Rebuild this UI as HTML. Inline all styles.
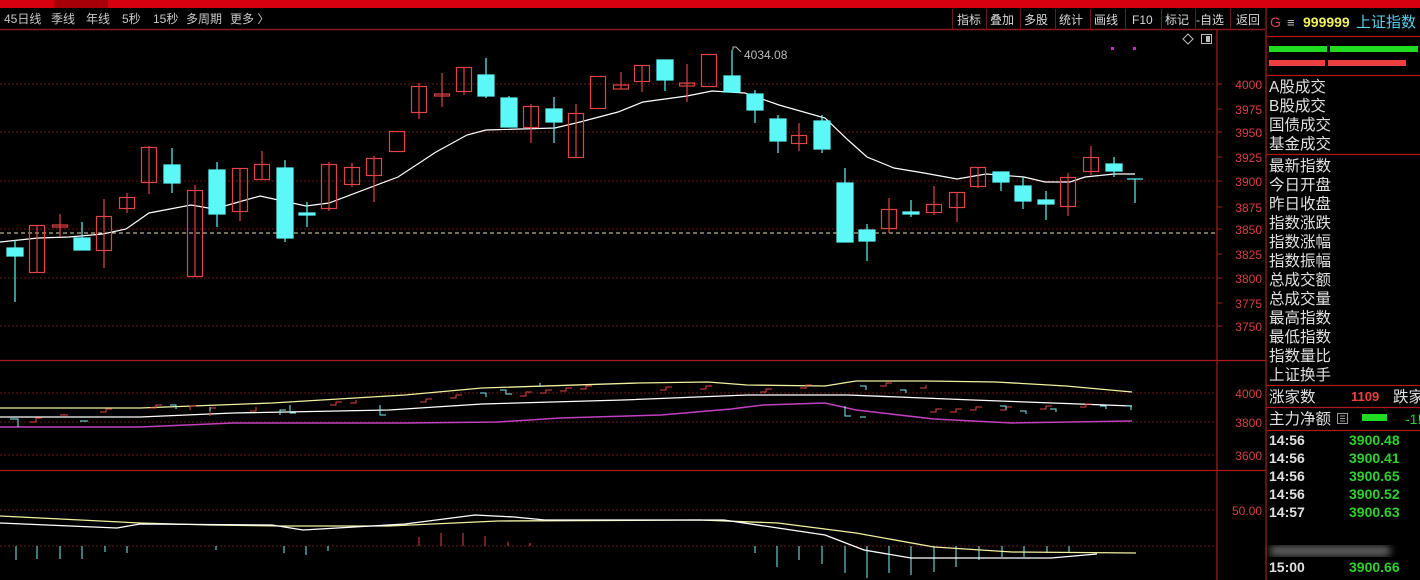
<!DOCTYPE html>
<html><head><meta charset="utf-8"><style>
html,body{margin:0;padding:0;background:#000;width:1420px;height:580px;overflow:hidden;font-family:"Liberation Sans","Noto Sans CJK SC",sans-serif}
svg{position:absolute;left:0;top:0}
</style></head><body>
<svg width="1420" height="580" viewBox="0 0 1420 580" xmlns="http://www.w3.org/2000/svg" font-family="Liberation Sans, Noto Sans CJK SC, sans-serif">
<rect width="1420" height="580" fill="#000"/>
<rect x="0" y="0" width="1420" height="8" fill="#d60010"/>
<rect x="54" y="0" width="54" height="8" fill="#a80008"/>
<line x1="0" y1="29.5" x2="1265" y2="29.5" stroke="#8a1a20" stroke-width="1.5"/>
<g fill="#c8c8c8" font-size="12">
<text x="4" y="23">45日线</text><text x="51" y="23">季线</text><text x="86" y="23">年线</text><text x="122" y="23">5秒</text><text x="153" y="23">15秒</text><text x="186" y="23">多周期</text><text x="230" y="23">更多 〉</text>
</g>
<g fill="#d8d8d8" font-size="12">
<text x="957" y="24">指标</text><text x="990" y="24">叠加</text><text x="1024" y="24">多股</text><text x="1059" y="24">统计</text><text x="1094" y="24">画线</text><text x="1132" y="24">F10</text><text x="1165" y="24">标记</text><text x="1196" y="24">-自选</text><text x="1236" y="24">返回</text>
</g>
<g stroke="#6a1a1a" stroke-width="1">
<line x1="952.5" y1="9" x2="952.5" y2="29"/><line x1="986.5" y1="9" x2="986.5" y2="29"/><line x1="1020.5" y1="9" x2="1020.5" y2="29"/><line x1="1055.5" y1="9" x2="1055.5" y2="29"/><line x1="1090.5" y1="9" x2="1090.5" y2="29"/><line x1="1125.5" y1="9" x2="1125.5" y2="29"/><line x1="1161.5" y1="9" x2="1161.5" y2="29"/><line x1="1195.5" y1="9" x2="1195.5" y2="29"/><line x1="1230.5" y1="9" x2="1230.5" y2="29"/>
</g>
<g stroke="#b01818" stroke-width="1.2">
<line x1="1217" y1="30" x2="1217" y2="580"/>
<line x1="1266" y1="8" x2="1266" y2="580"/>
<line x1="0" y1="360.5" x2="1266" y2="360.5"/>
<line x1="0" y1="470.5" x2="1266" y2="470.5"/>
</g>
<g stroke="#6a1818" stroke-width="1" stroke-dasharray="2,2">
<line x1="0" y1="84" x2="1217" y2="84"/><line x1="0" y1="132" x2="1217" y2="132"/><line x1="0" y1="181" x2="1217" y2="181"/><line x1="0" y1="229" x2="1217" y2="229"/><line x1="0" y1="278" x2="1217" y2="278"/><line x1="0" y1="326" x2="1217" y2="326"/>
<line x1="0" y1="393" x2="1217" y2="393"/><line x1="0" y1="422" x2="1217" y2="422"/><line x1="0" y1="455" x2="1217" y2="455"/>
<line x1="0" y1="510" x2="1217" y2="510"/><line x1="0" y1="546" x2="1217" y2="546"/>
</g>
<line x1="0" y1="233" x2="1217" y2="233" stroke="#e8e0b0" stroke-width="1" stroke-dasharray="4,3"/>
<g stroke="#b01818"><line x1="1217" y1="84" x2="1222" y2="84"/><line x1="1217" y1="109" x2="1222" y2="109"/><line x1="1217" y1="132" x2="1222" y2="132"/><line x1="1217" y1="157" x2="1222" y2="157"/><line x1="1217" y1="181" x2="1222" y2="181"/><line x1="1217" y1="207" x2="1222" y2="207"/><line x1="1217" y1="229" x2="1222" y2="229"/><line x1="1217" y1="254" x2="1222" y2="254"/><line x1="1217" y1="278" x2="1222" y2="278"/><line x1="1217" y1="303" x2="1222" y2="303"/><line x1="1217" y1="326" x2="1222" y2="326"/></g>
<g fill="#d84040" font-size="12" text-anchor="end">
<text x="1262" y="89">4000</text><text x="1262" y="114">3975</text><text x="1262" y="137">3950</text><text x="1262" y="162">3925</text><text x="1262" y="186">3900</text><text x="1262" y="212">3875</text><text x="1262" y="234">3850</text><text x="1262" y="259">3825</text><text x="1262" y="283">3800</text><text x="1262" y="308">3775</text><text x="1262" y="331">3750</text>
<text x="1262" y="398">4000</text><text x="1262" y="427">3800</text><text x="1262" y="460">3600</text><text x="1262" y="515">50.00</text>
</g>
<path d="M1188 34 L1193 39 L1188 44 L1183 39 Z" fill="none" stroke="#bbb"/>
<rect x="1201.5" y="34.5" width="10" height="9" fill="none" stroke="#bbb"/><rect x="1206" y="36" width="4" height="6" fill="#bbb"/>
<rect x="1111" y="47" width="3" height="3" fill="#c030c0"/><rect x="1133" y="47" width="3" height="3" fill="#c030c0"/>
<polyline fill="none" stroke="#fff" stroke-width="1.2" points="0,242 38,238 69,237 103,234 126,229 149,213 191,205 214,209 260,196 306,206 329,203 398,177 436,152 467,135 486,130 555,128 580,122 618,112 643,102 687,96 712,91 745,93 779,105 825,118 848,140 867,157 894,168 924,173 957,179 986,174 1024,177 1045,182 1070,182 1085,177 1114,174 1135,174"/>
<g stroke="#e04444" fill="none" stroke-width="1.2">
<line x1="37" y1="225" x2="37" y2="273"/><rect x="29.5" y="225.5" width="15" height="47"/>
<line x1="60" y1="214" x2="60" y2="237"/><rect x="52.5" y="225" width="15" height="2"/>
<line x1="104" y1="199" x2="104" y2="268"/><rect x="96.5" y="216.5" width="15" height="34"/>
<line x1="127" y1="193" x2="127" y2="213"/><rect x="119.5" y="197.5" width="15" height="11"/>
<line x1="149" y1="146" x2="149" y2="194"/><rect x="141.5" y="147.5" width="15" height="35"/>
<line x1="195" y1="185" x2="195" y2="277"/><rect x="187.5" y="190.5" width="15" height="86"/>
<line x1="240" y1="168" x2="240" y2="221"/><rect x="232.5" y="168.5" width="15" height="43"/>
<line x1="262" y1="151" x2="262" y2="180"/><rect x="254.5" y="164.5" width="15" height="15"/>
<line x1="329" y1="162" x2="329" y2="211"/><rect x="321.5" y="164.5" width="15" height="44"/>
<line x1="352" y1="163" x2="352" y2="187"/><rect x="344.5" y="167.5" width="15" height="17"/>
<line x1="374" y1="156" x2="374" y2="202"/><rect x="366.5" y="158.5" width="15" height="17"/>
<rect x="389.5" y="131.5" width="15" height="20"/>
<line x1="419" y1="83" x2="419" y2="119"/><rect x="411.5" y="86.5" width="15" height="26"/>
<line x1="442" y1="73" x2="442" y2="107"/><rect x="434.5" y="94" width="15" height="2"/>
<line x1="464" y1="67" x2="464" y2="95"/><rect x="456.5" y="67.5" width="15" height="24"/>
<line x1="531" y1="104" x2="531" y2="143"/><rect x="523.5" y="106.5" width="15" height="21"/>
<line x1="576" y1="104" x2="576" y2="158"/><rect x="568.5" y="113.5" width="15" height="44"/>
<rect x="590.5" y="76.5" width="15" height="32"/>
<line x1="621" y1="72" x2="621" y2="89"/><rect x="613.5" y="85" width="15" height="4"/>
<line x1="642" y1="65" x2="642" y2="92"/><rect x="634.5" y="65.5" width="15" height="16"/>
<line x1="687" y1="64" x2="687" y2="102"/><rect x="679.5" y="83" width="15" height="3"/>
<rect x="701.5" y="54.5" width="15" height="32"/>
<line x1="799" y1="123" x2="799" y2="151"/><rect x="791.5" y="135.5" width="15" height="8"/>
<line x1="889" y1="198" x2="889" y2="233"/><rect x="881.5" y="209.5" width="15" height="19"/>
<line x1="934" y1="186" x2="934" y2="215"/><rect x="926.5" y="204.5" width="15" height="8"/>
<line x1="957" y1="192" x2="957" y2="222"/><rect x="949.5" y="192.5" width="15" height="15"/>
<line x1="978" y1="167" x2="978" y2="188"/><rect x="970.5" y="167.5" width="15" height="19"/>
<line x1="1068" y1="173" x2="1068" y2="216"/><rect x="1060.5" y="177.5" width="15" height="29"/>
<line x1="1091" y1="146" x2="1091" y2="175"/><rect x="1083.5" y="157.5" width="15" height="14"/>
</g>
<g stroke="#5cf8f8" fill="#5cf8f8" stroke-width="1.2">
<line x1="15" y1="240" x2="15" y2="302"/><rect x="7" y="248" width="16" height="8"/>
<line x1="82" y1="222" x2="82" y2="250"/><rect x="74" y="238" width="16" height="12"/>
<line x1="172" y1="148" x2="172" y2="193"/><rect x="164" y="165" width="16" height="18"/>
<line x1="217" y1="162" x2="217" y2="227"/><rect x="209" y="170" width="16" height="44"/>
<line x1="285" y1="160" x2="285" y2="242"/><rect x="277" y="168" width="16" height="70"/>
<line x1="307" y1="202" x2="307" y2="227"/><rect x="299" y="213" width="16" height="2"/>
<line x1="486" y1="58" x2="486" y2="98"/><rect x="478" y="75" width="16" height="21"/>
<line x1="509" y1="96" x2="509" y2="127"/><rect x="501" y="98" width="16" height="29"/>
<line x1="554" y1="97" x2="554" y2="143"/><rect x="546" y="109" width="16" height="13"/>
<line x1="665" y1="60" x2="665" y2="91"/><rect x="657" y="60" width="16" height="20"/>
<line x1="732" y1="50" x2="732" y2="92"/><rect x="724" y="76" width="16" height="16"/>
<line x1="755" y1="90" x2="755" y2="123"/><rect x="747" y="94" width="16" height="16"/>
<line x1="778" y1="115" x2="778" y2="153"/><rect x="770" y="119" width="16" height="22"/>
<line x1="822" y1="115" x2="822" y2="153"/><rect x="814" y="121" width="16" height="28"/>
<line x1="845" y1="168" x2="845" y2="242"/><rect x="837" y="183" width="16" height="59"/>
<line x1="867" y1="224" x2="867" y2="261"/><rect x="859" y="230" width="16" height="11"/>
<line x1="911" y1="200" x2="911" y2="217"/><rect x="903" y="212" width="16" height="2"/>
<line x1="1001" y1="172" x2="1001" y2="191"/><rect x="993" y="172" width="16" height="10"/>
<line x1="1023" y1="177" x2="1023" y2="209"/><rect x="1015" y="186" width="16" height="15"/>
<line x1="1046" y1="191" x2="1046" y2="220"/><rect x="1038" y="200" width="16" height="4"/>
<line x1="1114" y1="157" x2="1114" y2="177"/><rect x="1106" y="164" width="16" height="7"/>
<line x1="1135" y1="179" x2="1135" y2="203"/><line x1="1127" y1="179" x2="1143" y2="179"/>
</g>
<path d="M733 50 L733 47 L736 47 L741 52" fill="none" stroke="#bbb"/>
<text x="744" y="59" fill="#bbb" font-size="12">4034.08</text>
<polyline fill="none" stroke="#f0f0a0" stroke-width="1.3" points="0,408 140,408 272,403 405,395 482,388 638,383 708,382 747,385 825,386 856,381 926,381 996,382 1066,386 1132,392"/>
<polyline fill="none" stroke="#fff" stroke-width="1.3" points="0,417 140,417 233,413 389,410 482,404 623,400 747,395 848,395 973,400 1132,406"/>
<polyline fill="none" stroke="#c040c0" stroke-width="1.5" points="0,427 140,427 233,423 405,423 498,422 560,418 661,415 731,409 763,405 825,403 856,410 934,419 1012,423 1132,421"/>
<g stroke="#e04444" stroke-width="1" fill="none">
<path d="M30 422h6v-4h6M60 415h8M100 412h6v-3h6M150 408h6v-3h6M190 410v-4h6M210 416v-8h6M250 411h6v-4M330 405h6v-3h6M350 403h6v-3M420 402h6v-3h6M450 398h6v-3h6M520 396h6v-4h6M540 393h6v-3h6M560 391h6v-3h6M580 389h6v-3h6M660 390h6v-3h6M700 389h6v-3h6M760 392h6v-3h6M800 388h6v-3h6M880 386h6v-3h6M920 388h6v-3M930 412h6v-3h6M950 412h6v-3h6M970 410h6v-3h6M1000 410h6v-3h6M1040 409h6v-3h6M1080 407h6v-3h6"/>
</g>
<g stroke="#7ef0f0" stroke-width="1" fill="none">
<path d="M10 419h8v8M80 421h8M170 405h6v4M210 407v4M280 415v-5h6M290 405v8h6M380 405v10h6M480 393h6v4M500 390h6v4h6M540 383v4M860 386h6v4M900 390h6v3M845 406v10h6M860 417h6M1000 406h6v4M1020 411h6v3M1050 409h6v3M1100 406h6v3M1125 406h6v4"/>
</g>
<g stroke="#e04444" stroke-width="1">
<line x1="419" y1="546" x2="419" y2="537"/><line x1="441" y1="546" x2="441" y2="533"/><line x1="463" y1="546" x2="463" y2="533"/><line x1="485" y1="546" x2="485" y2="536"/><line x1="508" y1="546" x2="508" y2="542"/><line x1="530" y1="546" x2="530" y2="543"/>
</g>
<g stroke="#7ef0f0" stroke-width="1">
<line x1="16" y1="546" x2="16" y2="560"/><line x1="37" y1="546" x2="37" y2="559"/><line x1="60" y1="546" x2="60" y2="559"/><line x1="82" y1="546" x2="82" y2="559"/><line x1="105" y1="546" x2="105" y2="552"/><line x1="127" y1="546" x2="127" y2="553"/>
<line x1="216" y1="546" x2="216" y2="550"/><line x1="284" y1="546" x2="284" y2="553"/><line x1="306" y1="546" x2="306" y2="555"/><line x1="328" y1="546" x2="328" y2="551"/>
<line x1="755" y1="546" x2="755" y2="553"/><line x1="777" y1="546" x2="777" y2="567"/><line x1="799" y1="546" x2="799" y2="560"/><line x1="822" y1="546" x2="822" y2="564"/><line x1="845" y1="546" x2="845" y2="573"/><line x1="867" y1="546" x2="867" y2="578"/><line x1="889" y1="546" x2="889" y2="573"/><line x1="911" y1="546" x2="911" y2="575"/><line x1="934" y1="546" x2="934" y2="572"/><line x1="956" y1="546" x2="956" y2="567"/><line x1="979" y1="546" x2="979" y2="560"/><line x1="1002" y1="546" x2="1002" y2="557"/><line x1="1024" y1="546" x2="1024" y2="557"/><line x1="1047" y1="546" x2="1047" y2="553"/><line x1="1069" y1="546" x2="1069" y2="553"/>
</g>
<polyline fill="none" stroke="#f0f0a0" stroke-width="1.3" points="0,516 140,523 210,525 280,526 389,526 498,521 700,520 778,523 856,533 934,547 1012,552 1136,553"/>
<polyline fill="none" stroke="#fff" stroke-width="1.3" points="0,523 117,528 140,524 272,525 303,530 405,524 475,515 514,517 545,520 724,520 825,535 864,550 911,558 981,558 1051,558 1097,554"/>
<text x="1270" y="27" fill="#e04444" font-size="14">G</text>
<text x="1287" y="27" fill="#c8c8c8" font-size="13">≡</text>
<text x="1303" y="27" fill="#f0f060" font-size="14" font-weight="bold">999999</text>
<text x="1356" y="27" fill="#5ccfe8" font-size="15">上证指数</text>
<g stroke="#b01818" stroke-width="1.2">
<line x1="1266" y1="36.5" x2="1420" y2="36.5"/><line x1="1266" y1="75.5" x2="1420" y2="75.5"/><line x1="1266" y1="154.5" x2="1420" y2="154.5"/><line x1="1266" y1="385.5" x2="1420" y2="385.5"/><line x1="1266" y1="407.5" x2="1420" y2="407.5"/><line x1="1266" y1="430.5" x2="1420" y2="430.5"/>
</g>
<rect x="1269" y="46" width="58" height="6" fill="#20dc20"/><rect x="1330" y="46" width="88" height="6" fill="#20dc20"/>
<rect x="1269" y="60" width="56" height="6" fill="#ec4040"/><rect x="1328" y="60" width="78" height="6" fill="#ec4040"/>
<g fill="#e0e0e0" font-size="15.5">
<text x="1269" y="92">A股成交</text><text x="1269" y="111">B股成交</text><text x="1269" y="130">国债成交</text><text x="1269" y="149">基金成交</text>
<text x="1269" y="171">最新指数</text><text x="1269" y="190">今日开盘</text><text x="1269" y="209">昨日收盘</text><text x="1269" y="228">指数涨跌</text><text x="1269" y="247">指数涨幅</text><text x="1269" y="266">指数振幅</text><text x="1269" y="285">总成交额</text><text x="1269" y="304">总成交量</text><text x="1269" y="323">最高指数</text><text x="1269" y="342">最低指数</text><text x="1269" y="361">指数量比</text><text x="1269" y="380">上证换手</text>
<text x="1269" y="402">涨家数</text><text x="1393" y="402">跌家数</text>
<text x="1269" y="424">主力净额</text>
</g>
<text x="1351" y="401" fill="#ec4040" font-size="13" font-weight="bold">1109</text>
<rect x="1337.5" y="413.5" width="10" height="10" fill="none" stroke="#999"/><path d="M1340 416h5M1340 418.5h5M1340 421h5" stroke="#999"/>
<rect x="1362" y="414" width="25" height="7" fill="#20dc20"/>
<text x="1405" y="424" fill="#20dc20" font-size="14">-1!</text>
<g font-size="14" font-weight="bold">
<g fill="#e0e0e0"><text x="1269" y="445">14:56</text><text x="1269" y="463">14:56</text><text x="1269" y="481">14:56</text><text x="1269" y="499">14:56</text><text x="1269" y="517">14:57</text><text x="1269" y="572">15:00</text></g>
<g fill="#30d030"><text x="1349" y="445">3900.48</text><text x="1349" y="463">3900.41</text><text x="1349" y="481">3900.65</text><text x="1349" y="499">3900.52</text><text x="1349" y="517">3900.63</text><text x="1349" y="572">3900.66</text></g>
</g>
<defs><filter id="b"><feGaussianBlur stdDeviation="4"/></filter></defs>
<g filter="url(#b)" opacity="0.5">
<rect x="1270" y="546" width="120" height="10" fill="#ccc"/>
</g>
</svg>
</body></html>
